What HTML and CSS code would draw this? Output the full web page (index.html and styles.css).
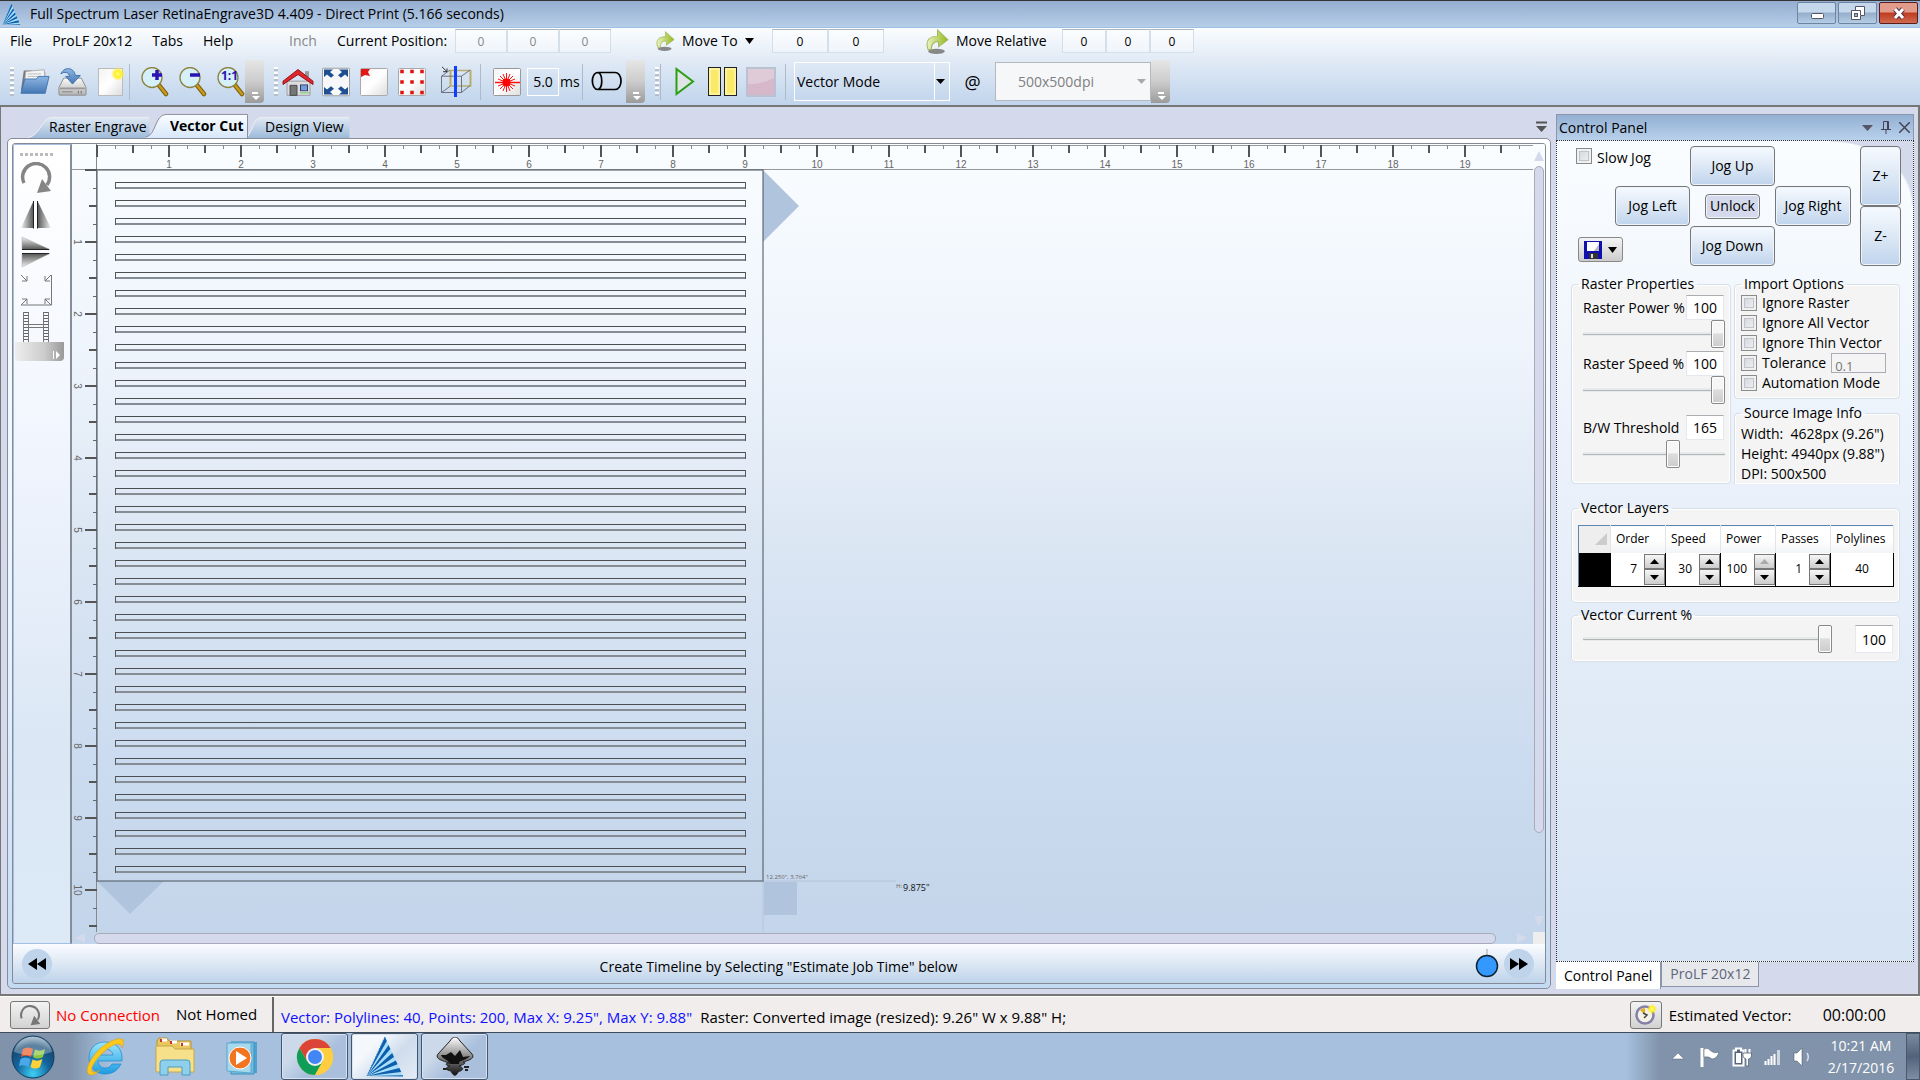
FILE: index.html
```html
<!DOCTYPE html>
<html lang="en">
<head>
<meta charset="utf-8">
<title>Full Spectrum Laser RetinaEngrave3D</title>
<link rel="stylesheet" href="styles.css">
</head>
<body>
<svg width="0" height="0" class="defs" aria-hidden="true">
  <defs>
    <linearGradient id="blueG" x1="0" y1="0" x2="0" y2="1"><stop offset="0" stop-color="#8fb6e2"/><stop offset="1" stop-color="#4478b4"/></linearGradient>
    <linearGradient id="greyG" x1="0" y1="0" x2="0" y2="1"><stop offset="0" stop-color="#fafafa"/><stop offset="1" stop-color="#b4b4b4"/></linearGradient>
    <linearGradient id="paperG" x1="0" y1="0" x2="1" y2="1"><stop offset="0" stop-color="#f4f4f4"/><stop offset=".5" stop-color="#fff"/><stop offset="1" stop-color="#dcdcdc"/></linearGradient>
    <linearGradient id="mirL" x1="0" x2="1"><stop offset="0" stop-color="#f2f2f2"/><stop offset="1" stop-color="#555"/></linearGradient>
    <linearGradient id="mirR" x1="0" x2="1"><stop offset="0" stop-color="#555"/><stop offset="1" stop-color="#f2f2f2"/></linearGradient>
    <linearGradient id="mirT" x1="0" y1="0" x2="0" y2="1"><stop offset="0" stop-color="#f2f2f2"/><stop offset="1" stop-color="#555"/></linearGradient>
    <linearGradient id="mirB" x1="0" y1="0" x2="0" y2="1"><stop offset="0" stop-color="#555"/><stop offset="1" stop-color="#f2f2f2"/></linearGradient>
    <linearGradient id="greenG" x1="0" x2="1"><stop offset="0" stop-color="#e9f2c0"/><stop offset="1" stop-color="#94b81c"/></linearGradient>
    <linearGradient id="tabG" x1="0" y1="0" x2="0" y2="1"><stop offset="0" stop-color="#dfe9f4"/><stop offset="1" stop-color="#9dbad9"/></linearGradient>
    <linearGradient id="tabA" x1="0" y1="0" x2="0" y2="1"><stop offset="0" stop-color="#fafdff"/><stop offset="1" stop-color="#d7e7fa"/></linearGradient>
    <radialGradient id="orbG" cx=".5" cy=".9" r=".9"><stop offset="0" stop-color="#3fd0f5"/><stop offset=".45" stop-color="#12659c"/><stop offset=".75" stop-color="#164a76"/><stop offset="1" stop-color="#9fb9cc"/></radialGradient>
    <linearGradient id="ieG" x1="0" y1="0" x2="0" y2="1"><stop offset="0" stop-color="#9be6fb"/><stop offset="1" stop-color="#1d9be2"/></linearGradient>
    <linearGradient id="inkG" x1="0" y1="0" x2="0" y2="1"><stop offset="0" stop-color="#fff"/><stop offset=".5" stop-color="#8a8a8a"/><stop offset="1" stop-color="#111"/></linearGradient>
    <radialGradient id="glow"><stop offset="0" stop-color="#ffff70"/><stop offset=".5" stop-color="#ffee30"/><stop offset="1" stop-color="#ffee30" stop-opacity="0"/></radialGradient>
    <g id="lens"><path d="M18 17L26 27" stroke="#7d6010" stroke-width="4.500" stroke-linecap="round"/><path d="M18 17L26 27" stroke="#c89a18" stroke-width="2.500" stroke-linecap="round"/><circle cx="12" cy="10.500" r="10" fill="#d6f0fa" stroke="#8d8440" stroke-width="1.300"/></g>
    <g id="fan"><path d="M20 0L38 39H2Z" fill="#a9def8"/><g fill="#0d5fae"><path d="M2 39L20 0 21.800 4ZM2 39L23.600 8 25.400 12ZM2 39L27.200 16 29 20ZM2 39L30.800 23.500 32.600 27.300ZM2 39L34.400 31 36.200 35ZM2 39L38 38.200V39.500Z"/></g><path d="M20 0L2 39" stroke="#2b76bd" stroke-dasharray="2 1"/></g>
    <g id="moveArrow"><ellipse cx="10" cy="25" rx="8" ry="3" fill="#888"/><path d="M2 23C-1 13 3 8 11 8V1L21 12 12 20V14C7 14 5 17 5 23Z" fill="url(#greenG)" stroke="#a5b860"/></g>
    <g id="overflow"><path d="M7 33H13" stroke="#fff" stroke-width="2"/><path d="M7 36H15L11 40Z" fill="#fff"/></g>
  </defs>
</svg>

<header class="titlebar">
  <svg width="19" height="21" viewBox="0 0 40 40" preserveAspectRatio="none"><use href="#fan"/></svg>
  <h1>Full Spectrum Laser RetinaEngrave3D 4.409 - Direct Print (5.166 seconds)</h1>
  <div class="winbtns">
    <button aria-label="Minimize"><svg width="38" height="20"><rect x="13.500" y="10.500" width="12" height="5" rx="1" fill="#fff" stroke="#556"/></svg></button>
    <button aria-label="Restore"><svg width="38" height="20"><path d="M16.500 3.500H25.500V12.500H21.500V16.500H12.500V7.500H16.500Z" fill="#fff" stroke="#556"/><rect x="15.500" y="10.500" width="3" height="3" fill="#9bb4d0" stroke="#556"/><path d="M16 7.500H21.500V12" fill="none" stroke="#556"/></svg></button>
    <button class="close" aria-label="Close"><svg width="38" height="20"><path d="M15 6L23 15M23 6L15 15" stroke="#534" stroke-width="5"/><path d="M15 6L23 15M23 6L15 15" stroke="#fff" stroke-width="3"/></svg></button>
  </div>
</header>

<div class="toolbars">
  <nav class="menurow">
    <div class="menus"><button>File</button><button>ProLF 20x12</button><button>Tabs</button><button>Help</button></div>
    <span class="unit">Inch</span>
    <span class="poslabel">Current Position:</span>
    <div class="fields pos"><input value="0" disabled aria-label="X position"><input value="0" disabled aria-label="Y position"><input value="0" disabled aria-label="Z position"></div>
    <button class="moveto"><svg width="19" height="20" viewBox="0 0 22 28" preserveAspectRatio="none"><use href="#moveArrow"/></svg>Move To <svg width="9" height="6"><path d="M0 0H9L4.500 6Z"/></svg></button>
    <div class="fields to"><input value="0" aria-label="Move to X"><input value="0" aria-label="Move to Y"></div>
    <button class="moverel"><svg width="23" height="25" viewBox="0 0 22 28" preserveAspectRatio="none"><use href="#moveArrow"/></svg>Move Relative</button>
    <div class="fields rel"><input value="0" aria-label="Relative X"><input value="0" aria-label="Relative Y"><input value="0" aria-label="Relative Z"></div>
  </nav>

  <div class="toolrow">
    <div class="group">
      <i class="grip"></i>
      <button aria-label="Open"><svg width="31" height="27" viewBox="0 0 32 32" preserveAspectRatio="none"><path d="M2 26L5 3H13L15 5H27V24Z" fill="#777"/><path d="M7 4L26 2L27 14H6Z" fill="#f4f4f4" stroke="#aaa"/><path d="M9 7H23M9 10H23" stroke="#bbb"/><path d="M6 13H18L20 10H31L27 30H2Z" fill="url(#blueG)" stroke="#3f74ae"/></svg></button>
      <button aria-label="Save"><svg width="31" height="29" viewBox="0 0 32 34" preserveAspectRatio="none"><path d="M7 13H25L30 24V32Q30 33 29 33H3Q2 33 2 32V24Z" fill="url(#greyG)" stroke="#888"/><path d="M3 25H29M5 29H16" stroke="#999" stroke-width="2"/><path d="M22 28V31M25 28V31" stroke="#666"/><path d="M4 8C7 0 17-1 19 10H24L16 20 9 11H13C12 6 8 5 4 8Z" fill="url(#blueG)" stroke="#3c6ea8"/></svg></button>
      <button aria-label="New"><svg width="31" height="29"><rect x="3.500" y="1.500" width="24" height="27" fill="url(#paperG)" stroke="#bbb"/><circle cx="23" cy="7" r="7" fill="url(#glow)"/></svg></button>
      <i class="sep"></i>
      <button aria-label="Zoom in"><svg width="29" height="30"><use href="#lens"/><path d="M17 3V13M12 8H22" stroke="#2b14b0" stroke-width="3.500"/></svg></button>
      <button aria-label="Zoom out"><svg width="29" height="30"><use href="#lens"/><path d="M12 8H22" stroke="#2b14b0" stroke-width="3.500"/></svg></button>
      <button aria-label="Actual size"><svg width="29" height="30"><use href="#lens"/><text x="5" y="13" class="one">1:1</text></svg></button>
      <button class="more" aria-label="More file tools"><svg width="19" height="43"><use href="#overflow"/></svg></button>
    </div>
    <div class="group">
      <i class="grip"></i>
      <button aria-label="Home"><svg width="32" height="30" viewBox="0 0 32 36" preserveAspectRatio="none"><path d="M5 17H28V34H5Z" fill="#ddd" stroke="#999"/><path d="M23 5H27V12H23Z" fill="#999"/><path d="M1 17L16 3 31 17V21L16 9 1 21Z" fill="#e2242c" stroke="#8a1015"/><path d="M8 22H15V34H8Z" fill="#777" stroke="#444"/><rect x="18.500" y="21.500" width="7" height="7" fill="#6f9fdc" stroke="#336"/><path d="M18 31H28" stroke="#6c6"/></svg></button>
      <button aria-label="Fit to window"><svg width="30" height="30" viewBox="0 0 30 36" preserveAspectRatio="none"><rect x="1.500" y="1.500" width="27" height="33" rx="1" fill="#f6f8fa" stroke="#999"/><path d="M3 3H12L9 6 13 10 10 13 6 9 3 12ZM27 3H18L21 6 17 10 20 13 24 9 27 12ZM3 33H12L9 30 13 26 10 23 6 27 3 24ZM27 33H18L21 30 17 26 20 23 24 27 27 24Z" fill="#1d4f91"/></svg></button>
      <button aria-label="Go to origin"><svg width="30" height="30"><rect x="1.500" y="1.500" width="27" height="27" rx="1" fill="url(#paperG)" stroke="#aaa"/><path d="M2 2H11L9 5 11 9 6 8 2 10Z" fill="#e01818"/></svg></button>
      <button aria-label="Job outline"><svg width="30" height="30"><rect x="1.500" y="1.500" width="27" height="27" rx="1" fill="url(#paperG)" stroke="#aaa"/><path d="M5 4.500h.01M15 4.500h.01M25 4.500h.01M5 15h.01M15 15h.01M25 15h.01M5 25.500h.01M15 25.500h.01M25 25.500h.01" stroke="#e01010" stroke-width="3.500" stroke-linecap="square"/></svg></button>
      <button class="wide" aria-label="Focus"><svg width="34" height="31" viewBox="0 0 34 38" preserveAspectRatio="none"><path d="M11.500 5.500H31.500V24.500H11.500Z" fill="none" stroke="#b8ad70" stroke-width="2"/><path d="M2.500 12.500H22.500V32.500H2.500ZM2.500 12.500L11 5M22.500 12.500L31 5M22.500 32.500L31 24M2.500 32.500L11 25" fill="none" stroke="#667"/><path d="M3 1L8 7M8 3V7H4" stroke="#222" fill="none"/><path d="M16.500 0V38" stroke="#1040ff" stroke-width="3"/></svg></button>
      <i class="sep"></i>
      <button class="laser" aria-label="Pulse laser"><svg width="30" height="30"><rect x="1.500" y="1.500" width="27" height="27" rx="1" fill="url(#paperG)" stroke="#999"/><g stroke="#ff1010"><path d="M3 15.500H28" stroke-width="1.500"/><path d="M14.500 6V25M8 9L21 22M21 9L8 22M11 7L18 24M18 7L11 24M6 12L23 19M6 19L23 12"/></g><circle cx="14.500" cy="15.500" r="4" fill="#f00"/></svg></button>
      <input class="ms" id="ms" value="5.0"><label class="mslabel" for="ms">ms</label>
      <i class="sep"></i>
      <button aria-label="Rotary"><svg width="32" height="21"><path d="M7 1.500H24C32 1.500 32 18.500 24 18.500H7C-.5 18.500-.5 1.500 7 1.500C12 3 12 17 7 18.500" fill="none" stroke="#000" stroke-width="1.700"/></svg></button>
      <button class="more" aria-label="More machine tools"><svg width="19" height="43"><use href="#overflow"/></svg></button>
    </div>
    <div class="group">
      <i class="grip"></i>
      <i class="sep"></i>
      <button aria-label="Run job"><svg width="22" height="31"><path d="M2.500 3L19 15.500 2.500 28Z" fill="#e0e4e6" stroke="#2aa010" stroke-width="2"/></svg></button>
      <button aria-label="Pause"><svg width="32" height="30"><g fill="#fbe96a" stroke="#222"><rect x="1.500" y=".5" width="12" height="28"/><rect x="17.500" y=".5" width="12" height="28"/></g><g fill="none" stroke="#fffbd0"><rect x="3" y="2" width="9" height="25"/><rect x="19" y="2" width="9" height="25"/></g></svg></button>
      <button aria-label="Stop" disabled><svg width="30" height="30"><rect x="1" y="1" width="28" height="28" fill="#dfcad8" stroke="#bac1d0" stroke-width="2"/><path d="M2 17Q14 18 28 11V28H2Z" fill="#d6b8ca"/></svg></button>
      <i class="sep mid"></i>
      <div class="combo"><select aria-label="Mode"><option>Vector Mode</option></select><svg width="9" height="5"><path d="M0 0H9L4.500 5Z"/></svg></div>
      <span class="at">@</span>
      <div class="combo off"><select aria-label="Resolution" disabled><option>500x500dpi</option></select><svg width="9" height="5"><path d="M0 0H9L4.500 5Z" fill="#aaa"/></svg></div>
      <button class="more" aria-label="More job tools"><svg width="19" height="43"><use href="#overflow"/></svg></button>
    </div>
  </div>
</div>

<main class="workspace">
  <section class="docs">
    <div class="tabs">
      <button class="tab t1"><svg viewBox="0 0 122 24" preserveAspectRatio="none"><path d="M0 23.500C12 22 14 1.500 24 1.500H121.500V24H0Z" fill="url(#tabG)"/><path d="M0 23.500C12 22 14 1.500 24 1.500H121.500" fill="none" stroke="#eee"/></svg><span>Raster Engrave</span></button>
      <button class="tab t2"><svg viewBox="0 0 102 26" preserveAspectRatio="none"><path d="M0 25C10 23 9 1.500 20 1.500H101.500V26H0Z" fill="url(#tabA)"/><path d="M0 25C10 23 9 1.500 20 1.500H101.500V26" fill="none" stroke="#8a8d9a"/></svg><span>Vector Cut</span></button>
      <button class="tab t3"><svg viewBox="0 0 102 24" preserveAspectRatio="none"><path d="M0 22C6 12 6 1.500 14 1.500H101.500V24H0Z" fill="url(#tabG)"/><path d="M0 22C6 12 6 1.500 14 1.500H101.500" fill="none" stroke="#eee"/></svg><span>Design View</span></button>
      <button class="doclist" aria-label="Document list"><svg width="11" height="11"><path d="M0 1.500H11" stroke="#555" stroke-width="2"/><path d="M0 5H11L5.500 11Z" fill="#555"/></svg></button>
    </div>
    <div class="frame"><div class="inner">
      <div class="board">
        <div class="toolbox">
          <i class="dots"></i>
          <button aria-label="Rotate"><svg width="32" height="32"><path d="M4 21A13.500 13.500 0 1 1 27 23" fill="none" stroke="#858585" stroke-width="3.500"/><path d="M22 17L31 29 17 31Z" fill="#858585"/></svg></button>
          <button aria-label="Mirror horizontally"><svg width="32" height="30"><path d="M13.500 1V28H1Z" fill="url(#mirL)"/><path d="M17.500 1V28H31Z" fill="url(#mirR)"/><path d="M13.500 1V28.500M17.500 1V28.500" stroke="#222"/></svg></button>
          <button aria-label="Mirror vertically"><svg width="32" height="32"><path d="M2 1V13.500H30Z" fill="url(#mirT)" stroke="#aaa" stroke-width=".5"/><path d="M2 31V17.500H30Z" fill="url(#mirB)" stroke="#aaa" stroke-width=".5"/><path d="M2 13.500H29M2 17.500H29" stroke="#222"/></svg></button>
          <button aria-label="Scale"><svg width="32" height="32"><g fill="none" stroke="#777"><path d="M1 31H31.500V1"/><path d="M1 1L7 7M7 2V7H2M31 1L25 7M25 2V7H30M1 31L7 25M2 25H7V30M31 31L25 25M30 25H25V30"/></g></svg></button>
          <button aria-label="Array"><svg width="26" height="30"><path d="M3 0V30M23 0V30" stroke="#666" stroke-width="4" stroke-dasharray="1 2"/><path d="M.5 0V30M5.500 0V30M20.500 0V30M25.500 0V30M5 12.500H21M5 15.500H21" stroke="#777" fill="none"/></svg></button>
          <button class="moreh" aria-label="More edit tools"><svg width="48" height="19"><path d="M38.500 9V17" stroke="#fff"/><path d="M41 9L45 13 41 17Z" fill="#fff"/></svg></button>
        </div>
        <div class="viewport">
          <svg class="canvas" id="canvas" role="img" aria-label="Job preview"></svg>
          <div class="vscroll"><svg width="10" height="10"><path d="M5 0L10 10H0Z" fill="#d4d9ec"/></svg><i class="thumb"></i><svg width="10" height="10"><path d="M0 0H10L5 10Z" fill="#d4d9ec"/></svg></div>
          <div class="hscroll"><svg width="10" height="10"><path d="M10 0V10L0 5Z" fill="#d4d9ec"/></svg><i class="thumb"></i><svg width="10" height="10"><path d="M0 0L10 5 0 10Z" fill="#d4d9ec"/></svg></div>
          <i class="corner"></i>
        </div>
      </div>
      <div class="timeline">
        <button class="round" aria-label="Rewind"><svg width="18" height="12"><path d="M9 0V12L0 6ZM18 0V12L9 6Z"/></svg></button>
        <p>Create Timeline by Selecting "Estimate Job Time" below</p>
        <svg class="knob" width="24" height="30"><path d="M12 0V6" stroke="#ccc" stroke-width="2"/><circle cx="12" cy="17" r="10.500" fill="#3399ff" stroke="#123" stroke-width="1.500"/></svg>
        <button class="round" aria-label="Forward"><svg width="18" height="12"><path d="M0 0L9 6 0 12ZM9 0L18 6 9 12Z"/></svg></button>
      </div>
    </div></div>
  </section>

  <aside class="panel">
    <div class="panelhead"><h2>Control Panel</h2>
      <button aria-label="Panel menu"><svg width="11" height="6"><path d="M0 0H11L5.500 6Z" fill="#556"/></svg></button>
      <button aria-label="Pin panel"><svg width="10" height="13"><path d="M2.500 8V.5H7.500V8M0 8.500H10M5 9V13M6.500 1V8" fill="none" stroke="#445"/></svg></button>
      <button aria-label="Close panel"><svg width="11" height="11"><path d="M0 0L11 11M11 0L0 11" stroke="#445" stroke-width="1.500"/></svg></button>
    </div>
    <div class="panelbody">
      <div class="jog">
        <label class="slow"><input type="checkbox">Slow Jog</label>
        <button class="btn up">Jog Up</button>
        <button class="btn left">Jog Left</button>
        <button class="btn unlock">Unlock</button>
        <button class="btn right">Jog Right</button>
        <button class="savebtn" aria-label="Save settings"><svg width="18" height="18"><rect width="18" height="18" fill="#1010b0"/><path d="M3 1H15V10H3Z" fill="#fff"/><path d="M10 10L15 3V10Z" fill="#bbb"/><path d="M5 12H14V18H5Z" fill="#333"/><path d="M7 13H9V17H7Z" fill="#ddd"/></svg><svg width="9" height="6"><path d="M0 0H9L4.500 6Z"/></svg></button>
        <button class="btn down">Jog Down</button>
        <div class="zcol"><button class="btn">Z+</button><button class="btn">Z-</button></div>
      </div>
      <div class="props">
        <fieldset class="raster"><legend>Raster Properties</legend>
          <div class="prop"><label for="rp">Raster Power %</label><input class="num" value="100" aria-label="Raster power value"><input id="rp" type="range" min="0" max="100" value="100"></div>
          <div class="prop"><label for="rs">Raster Speed %</label><input class="num" value="100" aria-label="Raster speed value"><input id="rs" type="range" min="0" max="100" value="100"></div>
          <div class="prop last"><label for="bw">B/W Threshold</label><input class="num" value="165" aria-label="Threshold value"><input id="bw" type="range" min="0" max="255" value="165"></div>
        </fieldset>
        <div class="side">
          <fieldset class="import"><legend>Import Options</legend>
            <label><input type="checkbox">Ignore Raster</label>
            <label><input type="checkbox">Ignore All Vector</label>
            <label><input type="checkbox">Ignore Thin Vector</label>
            <div class="tol"><label><input type="checkbox">Tolerance</label><input class="tolval" value="0.1" disabled aria-label="Tolerance value"></div>
            <label><input type="checkbox">Automation Mode</label>
          </fieldset>
          <fieldset class="source"><legend>Source Image Info</legend>
            <p>Width:&nbsp; 4628px (9.26")</p><p>Height: 4940px (9.88")</p><p>DPI: 500x500</p>
          </fieldset>
        </div>
      </div>
      <fieldset class="layers"><legend>Vector Layers</legend>
        <table>
          <thead><tr><th class="sel"><svg width="12" height="12"><path d="M12 0V12H0Z" fill="#ccc"/></svg></th><th>Order</th><th>Speed</th><th>Power</th><th>Passes</th><th class="poly">Polylines</th></tr></thead>
          <tbody><tr><td class="sel swatch"></td>
            <td><div class="spin"><input value="7" aria-label="Order"><div><button aria-label="Order up"><svg width="9" height="5"><path d="M0 5H9L4.500 0Z"/></svg></button><button aria-label="Order down"><svg width="9" height="5"><path d="M0 0H9L4.500 5Z"/></svg></button></div></div></td>
            <td><div class="spin"><input value="30" aria-label="Speed"><div><button aria-label="Speed up"><svg width="9" height="5"><path d="M0 5H9L4.500 0Z"/></svg></button><button aria-label="Speed down"><svg width="9" height="5"><path d="M0 0H9L4.500 5Z"/></svg></button></div></div></td>
            <td><div class="spin"><input value="100" aria-label="Power"><div><button aria-label="Power up" disabled><svg width="9" height="5"><path d="M0 5H9L4.500 0Z" fill="#aaa"/></svg></button><button aria-label="Power down"><svg width="9" height="5"><path d="M0 0H9L4.500 5Z"/></svg></button></div></div></td>
            <td><div class="spin"><input value="1" aria-label="Passes"><div><button aria-label="Passes up"><svg width="9" height="5"><path d="M0 5H9L4.500 0Z"/></svg></button><button aria-label="Passes down"><svg width="9" height="5"><path d="M0 0H9L4.500 5Z"/></svg></button></div></div></td>
            <td class="poly">40</td></tr></tbody>
        </table>
      </fieldset>
      <fieldset class="current"><legend>Vector Current %</legend>
        <div class="currow"><input type="range" min="0" max="100" value="100" aria-label="Vector current"><input class="num" value="100" aria-label="Vector current value"></div>
      </fieldset>
    </div>
    <div class="paneltabs"><button class="on">Control Panel</button><button>ProLF 20x12</button></div>
  </aside>
</main>

<footer class="status">
  <button class="sbtn" aria-label="Reconnect"><svg width="22" height="22" viewBox="0 0 32 32"><path d="M4 21A13 13 0 1 1 27 23" fill="none" stroke="#777" stroke-width="3"/><path d="M22 17L31 29 17 31Z" fill="#777"/></svg></button>
  <span class="red">No Connection</span><span class="homed">Not Homed</span>
  <span class="info"><b>Vector: Polylines: 40, Points: 200, Max X: 9.25", Max Y: 9.88"</b>Raster: Converted image (resized): 9.26" W x 9.88" H;</span>
  <button class="sbtn est" aria-label="Estimate job time"><svg width="22" height="22"><circle cx="10" cy="11" r="8.500" fill="#f4f2e4" stroke="#8580a8" stroke-width="2.500"/><path d="M10 11V4A7 7 0 0 0 5 6Z" fill="#e0b030"/><path d="M8 9L12 11 9 14" stroke="#444" fill="none" stroke-width="1.500"/><circle cx="17" cy="5" r="5" fill="url(#glow)"/></svg></button>
  <span class="estlabel">Estimated Vector:</span><span class="time">00:00:00</span>
</footer>

<footer class="taskbar">
  <button class="start" aria-label="Start"><svg width="44" height="44"><circle cx="22" cy="22" r="21" fill="url(#orbG)" stroke="#123a5c"/><path d="M12 14Q17 11 22 14L20 22Q15 19 10 22Z" fill="#ee5a24"/><path d="M24 14.500Q29 17 34 14L32 22Q27 25 22 22Z" fill="#8cc63f"/><path d="M9.500 24Q14 21 19.500 24L17.500 32Q13 29 8 31Z" fill="#4aa8e8"/><path d="M21.500 24.500Q26 27 31.500 24L29 32Q24 35 19.500 32Z" fill="#ffd23a"/><path d="M3 17A19.500 19.500 0 0 1 41 17Q22 24 3 17Z" fill="#fff" opacity=".3"/></svg></button>
  <button class="pin" aria-label="Internet Explorer"><svg width="40" height="40"><path d="M20 5C10 5 4 12 4 21S11 37 20 37C28 37 33 33 36 27H27C25 30 23 31 20 31C16 31 13 28 13 24H37C38 12 31 5 20 5ZM13 18C14 14 16 12 20 12S27 14 28 18Z" fill="url(#ieG)" stroke="#1c86cc" stroke-width=".7"/><path d="M6 38C-3 37 5 20 17 10C27 2 36 0 38 3C39 5 38 8 37 11C37 6 31 5 21 13C10 22 4 33 8 35Q11 36 15 33Q10 38 6 38Z" fill="#fbc81c" stroke="#d99a08" stroke-width=".5"/></svg></button>
  <button class="pin" aria-label="Explorer"><svg width="40" height="40"><path d="M2 4L4 1H12L14 4H36V14H2Z" fill="#e8c75c" stroke="#b99436"/><path d="M6 3H12M15 5H22M25 7H34" stroke="#fff" stroke-width="3"/><path d="M6 2V5M16 4V7M27 6V9" stroke="#c33" stroke-width="2"/><path d="M1 9H17L20 12H39V35H1Z" fill="#f6e08a" stroke="#c9a646"/><path d="M5 38V26Q5 23 8 23H32Q35 23 35 26V38H27V30H13V38Z" fill="#8ed0ec" stroke="#4c9cc4"/></svg></button>
  <button class="pin" aria-label="Media Player"><svg width="38" height="38"><path d="M10 4H32V35H10Z" fill="#4da3cf"/><path d="M6 4H29V36H6Z" fill="#74bde0" stroke="#3c8fbd"/><path d="M2 5H26V35L2 33Z" fill="#a6d9ee" stroke="#5aa6cc"/><circle cx="15" cy="20" r="11" fill="#f27420" stroke="#fff"/><path d="M11 13L22 20 11 27Z" fill="#fff"/></svg></button>
  <div class="running">
    <button class="run" aria-label="Chrome"><svg width="38" height="38"><circle cx="19" cy="19" r="18" fill="#ffcd40"/><path d="M19 10H34.600A18 18 0 0 0 3.400 10L11 23Z" fill="#db4437"/><path d="M3.400 10A18 18 0 0 0 19 37L27 23H11Z" fill="#0f9d58"/><path d="M19 37L27 23A9 9 0 0 0 27 15L19 10H34.600A18 18 0 0 1 19 37Z" fill="#ffcd40"/><circle cx="19" cy="19" r="9" fill="#f1f1f1"/><circle cx="19" cy="19" r="7" fill="#4285f4"/></svg></button>
    <button class="run active" aria-label="RetinaEngrave"><svg width="40" height="40"><use href="#fan"/></svg></button>
    <button class="run" aria-label="Inkscape"><svg width="38" height="40"><path d="M19 0C21 0 22 1 24 4L36 17C40 22 30 24 27 25C32 26 26 28 23 29C31 32 24 34 22 35C20 40 17 39 15 34C10 33 8 31 14 29C8 28 10 26 13 26C8 24-2 22 2 17L14 4C16 1 17 0 19 0Z" fill="url(#inkG)" stroke="#222"/><path d="M10 18L15 15 19 19 24 13 27 20 34 19C30 24 22 23 23 27H14C12 22 6 22 5 18Z" fill="#111"/><path d="M7 32h4M28 30h5M29 33h3" stroke="#222" stroke-width="2"/></svg></button>
  </div>
  <div class="tray">
    <svg width="12" height="7"><path d="M6 0L12 6H0Z" fill="#fff" stroke="#567" stroke-width=".5"/></svg>
    <svg width="20" height="20"><path d="M2 1V20" stroke="#fff" stroke-width="3"/><path d="M4 2Q8 0 11 4Q14 7 19 5Q17 12 12 12Q9 9 4 10Z" fill="#fff" stroke="#456" stroke-width=".5"/></svg>
    <svg width="20" height="20"><path d="M1.500 3.500H4V1.500H9V3.500H11.500V18.500H1.500Z" fill="#56667c" stroke="#fff" stroke-width="2"/><rect x="4" y="6" width="5" height="10" fill="#fff"/><path d="M13.500 2V6M17.500 2V6" stroke="#fff" stroke-width="2"/><path d="M11 6H19.500V9Q19 12 16.500 12V19H14V12Q11 11 11 9Z" fill="#fff" stroke="#456" stroke-width=".7"/></svg>
    <svg width="17" height="16"><path d="M1.500 12V16M4.500 10V16M7.500 7V16M10.500 5V16" stroke="#fff" stroke-width="2"/><path d="M14.500 1V16" stroke="#cdd5de" stroke-width="3"/></svg>
    <svg width="18" height="20"><path d="M1 6H4L9 1V19L4 14H1Z" fill="#fff" stroke="#456" stroke-width=".5"/><path d="M14 6Q16.500 10 14 14" fill="none" stroke="#dde" stroke-width="1.500"/></svg>
    <div class="clock">10:21 AM<br>2/17/2016</div>
  </div>
  <button class="desk" aria-label="Show desktop"></button>
</footer>
<script src="canvas.js"></script>
</body>
</html>
```
FILE: styles.css
```css
* { box-sizing: border-box; }
body { margin: 0; min-height: 100vh; display: flex; flex-direction: column; font: 15px/20px "Open Sans", "Noto Sans", sans-serif; color: #000; background: #d4d9ec; overflow: hidden; }
button, input, select { font: inherit; color: inherit; margin: 0; padding: 0; border: 0; background: none; border-radius: 0; }
h1, h2, p { margin: 0; font-size: 14px; font-weight: 400; }
svg { display: block; flex: none; }
.defs { position: absolute; }

/* Title bar */
.titlebar { height: 28px; display: flex; align-items: center; gap: 9px; padding: 0 2px; border-top: 1px solid #333; border-bottom: 1px solid #9fc0e2; background: linear-gradient(#95aed0, #b7cee8); }
.titlebar h1 { flex: 1; white-space: nowrap; }
.winbtns { display: flex; gap: 2px; align-self: flex-start; padding-top: 1px; }
.winbtns button { width: 39px; height: 22px; border: 1px solid #6d84a2; border-radius: 2px; background: linear-gradient(#c5d7ea 45%, #94aecb 50%, #b5cde5); }
.winbtns .close { border-color: #5b1c1c; background: linear-gradient(#e39c8c 45%, #bf3b20 50%, #cf6a50); }

/* Toolbars */
.toolbars { height: 79px; border-bottom: 2px solid #777; background: linear-gradient(#fbfdff, #dfe9f5 45%, #c0d4ec); }
.menurow { height: 26px; display: flex; align-items: center; white-space: nowrap; font-size: 14px; }
.menus { display: flex; gap: 20px; width: 279px; padding-left: 10px; }
.unit { width: 48px; padding-left: 10px; color: #888; }
.poslabel { width: 128px; padding-left: 10px; }
.fields { display: flex; }
.fields input { height: 24px; border: 1px solid #d5dfea; border-top-color: #abb5c0; text-align: center; font-size: 12px; background: rgba(255,255,255,.35); }
.pos { width: 201px; } .pos input { width: 52px; color: #888; }
.to { width: 154px; } .to input { width: 56px; }
.rel input { width: 44px; }
.moveto { display: flex; align-items: center; gap: 7px; width: 116px; }
.moverel { display: flex; align-items: center; gap: 7px; width: 136px; }
.toolrow { display: flex; gap: 10px; padding: 6px 0 0 10px; }
.group { display: flex; align-items: center; height: 43px; }
.group button { width: 38px; display: flex; justify-content: center; }
.group .wide { width: 49px; }
.group .laser { width: 41px; }
.grip { width: 4px; height: 30px; background: repeating-linear-gradient(#fff 0 2px, #b8bec8 2px 4px, transparent 4px 5px); margin-right: 1px; }
.sep { width: 1px; height: 36px; background: #aebacb; margin: 0 5px 0 0; }
.sep.mid { margin: 0 8px 0 5px; }
.group .more { width: 19px; height: 43px; border-radius: 0 0 4px; background: linear-gradient(#e6e6e6, #ccc 50%, #9b9b9b); }
.group:first-child .more { margin-left: -4px; }
.one { font: bold 12px "Open Sans", sans-serif; fill: #2b14b0; }
.ms { width: 32px; height: 28px; border: 1px solid #fff; text-align: center; margin-right: 1px; font-size: 14px; }
.mslabel { width: 22px; font-size: 14px; }
.combo { position: relative; width: 156px; height: 39px; border: 1px solid #fff; display: flex; }
.combo select { appearance: none; width: 100%; padding-left: 2px; font-size: 14px; opacity: 1; }
.combo svg { position: absolute; right: 4px; top: 16px; }
.combo::after { content: ""; position: absolute; right: 14px; top: 0; bottom: 0; width: 1px; background: #fff; }
.combo.off { border-color: #b4b9c0; background: #f6f7f9; }
.combo.off select { padding-left: 22px; color: #808080; }
.combo.off::after { display: none; }
.at { width: 45px; text-align: center; font-size: 18px; }

/* Workspace */
.workspace { flex: 1; display: flex; gap: 5px; padding: 7px 4px 5px 6px; border: solid #777; border-width: 0 2px 2px 1px; min-height: 0; }
.docs { flex: 1; min-width: 0; display: flex; flex-direction: column; }
.tabs { height: 24px; display: flex; align-items: flex-end; padding-left: 21px; }
.tab { position: relative; height: 22px; text-align: left; white-space: nowrap; font-size: 14px; }
.tab svg { position: absolute; inset: 0; width: 100%; height: 100%; }
.tab span { position: relative; }
.t1 { width: 122px; padding-left: 21px; }
.t2 { width: 102px; height: 25px; padding-left: 24px; margin-left: -4px; font-weight: 700; z-index: 1; }
.t3 { width: 102px; padding-left: 17px; }
.doclist { margin-left: auto; align-self: center; padding-right: 4px; }
.frame { flex: 1; display: flex; padding: 4px; border: 1px solid #888d9a; border-radius: 5px; background: linear-gradient(#fff, #e8f2fd 60%, #c4daf2); min-height: 0; }
.inner { flex: 1; display: flex; flex-direction: column; border: 1px solid #858a96; border-radius: 3px; min-width: 0; overflow: hidden; }
.board { flex: 1; display: flex; min-height: 0; }
.toolbox { width: 59px; display: flex; flex-direction: column; align-items: flex-start; gap: 6px; padding: 8px 0 0 6px; border: 1px solid #a3c0e2; border-right: 2px solid #858d98; background: linear-gradient(#fff, #f2f6fe 35%, #dbe7f5 75%, #dce9f6); }
.toolbox button { flex: none; }
.toolbox button:nth-of-type(5) { padding-left: 3px; }
.dots { width: 34px; height: 3px; background: repeating-linear-gradient(90deg, #bbb 0 3px, transparent 3px 5px); }
.toolbox .moreh { align-self: stretch; margin: -6px 6px 0 -5px; border-radius: 0 0 4px 4px; background: linear-gradient(90deg, #eee, #ccc 60%, #999); }
.viewport { flex: 1; min-width: 0; display: grid; grid-template: 1fr 12px / 1fr 12px; background: linear-gradient(#fafdff, #eef4fc 26%, #dbe6f3 50%, #cadaef 80%, #c3d5ea); }
.canvas { width: 100%; height: 100%; min-height: 0; }
.canvas text { font-family: "Liberation Sans", sans-serif; font-size: 10px; fill: #666; }
.canvas .cursor { font-size: 6px; font-family: "Open Sans", sans-serif; }
.canvas .dim { font-size: 9px; font-family: "Open Sans", sans-serif; fill: #111; }
.vscroll { display: flex; flex-direction: column; align-items: center; gap: 5px; padding: 7px 0 6px; }
.hscroll { display: flex; align-items: center; gap: 9px; padding: 0 6px 0 3px; }
.thumb { border: 1px solid #aab; border-radius: 5px; background: #d4d9ec; }
.vscroll .thumb { width: 10px; height: 667px; margin-bottom: auto; }
.hscroll .thumb { flex: 1; height: 11px; margin-right: 12px; }
.corner { background: #eee; }
.timeline { height: 39px; display: flex; align-items: center; gap: 5px; padding: 0 11px 0 9px; background: linear-gradient(#fafcff, #dde8f4 50%, #bed3ea); }
.timeline p { flex: 1; text-align: center; padding: 6px 0 0 30px; }
.round { width: 30px; height: 30px; border-radius: 50%; background: #bfd3ea; display: grid; place-items: center; }

/* Control panel */
.panel { width: 358px; display: flex; flex-direction: column; font-size: 14px; }
.panelhead { height: 26px; display: flex; align-items: center; gap: 8px; padding: 0 3px 0 2px; border: 1px solid #8c95aa; border-bottom: 0; background: linear-gradient(#93b0d3, #b8d0eb); }
.panelhead h2 { flex: 1; }
.panelbody { flex: 1; display: flex; flex-direction: column; padding: 5px 13px 0 14px; border: 1px dotted #333; background: radial-gradient(ellipse at 0 100%, transparent 69%, #d4d9ec 71%) right top / 82px 64px no-repeat, linear-gradient(#fafdff, #eaf1fb 40%, #dce8f5 80%, #d6e3f3); }
.jog { display: grid; grid-template: repeat(3, 40px) / 119px 85px 76px 1fr; }
.btn { border: 1px solid #777; border-radius: 4px; background: linear-gradient(#f6faff, #dde8f5 50%, #bfd4ed); box-shadow: inset 0 0 0 1px #eef4fb; }
.slow { display: flex; gap: 5px; padding: 2px 0 0 5px; align-items: flex-start; }
.up, .down { grid-column: 2; }
.left { grid-area: 2 / 1; width: 75px; justify-self: end; }
.unlock { grid-area: 2 / 2; place-self: center; width: 55px; height: 25px; background: #d4d9ec; }
.right { grid-area: 2 / 3; }
.down { grid-row: 3; }
.savebtn { grid-area: 3 / 1; width: 45px; height: 25px; margin: 11px 0 0 7px; display: flex; align-items: center; justify-content: space-evenly; border: 1px solid #888; border-radius: 3px; background: linear-gradient(#f4f4f4, #ccc); }
.zcol { grid-area: 1 / 4 / 4 / 5; display: flex; flex-direction: column; padding-left: 9px; width: 50px; }
.zcol .btn { flex: 1; }
input[type=checkbox] { appearance: none; flex: none; width: 16px; height: 16px; border: 1px solid #8b8b8b; background: linear-gradient(135deg, #cfd3da, #f4f4f6); box-shadow: inset 0 0 0 2px #f0f0f0, inset 0 0 0 3px #c0c4ca; }
fieldset { margin: 0; min-width: 0; border: 1px solid #d5dfe5; border-radius: 4px; background: #f4f4f4; padding: 0 0 0 6px; box-shadow: inset 0 0 0 1px #fff; }
legend { padding: 0 3px; line-height: 22px; height: 22px; }
.props { display: grid; grid-template-columns: 160px 1fr; gap: 3px; margin-top: 7px; height: 211px; }
.prop { display: grid; grid-template: 25px 28px / 1fr 39px; align-items: center; height: 56px; padding: 0 5px; white-space: nowrap; }
.prop.last { margin-top: 8px; }
.num { width: 38px; height: 25px; border: 1px solid #e3e9ef; border-top-color: #abadb3; background: #fff; text-align: center; }
.prop [type=range] { grid-column: 1 / 3; width: 142px; }
input[type=range] { appearance: none; height: 28px; background: linear-gradient(#b0b6b6, #b0b6b6) center / 100% 1px no-repeat, linear-gradient(#e7eaea, #e7eaea) center / 100% 4px no-repeat; }
input[type=range]::-webkit-slider-thumb { appearance: none; width: 14px; height: 28px; border: 1px solid #888; border-radius: 2px; background: linear-gradient(#f6f6f6 45%, #ddd 50%, #ccc); box-shadow: inset 0 0 0 1px #fff; }
.side { display: flex; flex-direction: column; gap: 3px; }
.import { height: 126px; }
.import label, .tol { display: flex; align-items: center; gap: 5px; height: 20px; white-space: nowrap; }
.import > label:first-of-type { margin-top: -2px; }
.tolval { width: 55px; height: 20px; border: 1px solid #aaadb3; color: #777; padding: 6px 0 0 3px; font-size: 13px; }
.source { flex: 1; border-bottom: 0; border-radius: 4px 4px 0 0; white-space: nowrap; }
.layers { height: 106px; margin-top: 13px; padding-top: 6px; }
table { border-collapse: collapse; width: 316px; table-layout: fixed; font-size: 12px; line-height: 16px; border: 1px solid #5d86b0; border-right: 0; background: #fff; }
th { height: 27px; padding: 0 0 0 5px; text-align: left; font-weight: 400; background: linear-gradient(#fff 50%, #f2f3f5); border-right: 1px solid #e2e4e6; font-size: 12px; white-space: nowrap; width: 55px; }
th.sel { width: 32px; background: #eee; padding-left: 16px; }
th.poly { width: 63px; }
td { height: 34px; padding: 0; border-right: 1px solid #000; border-bottom: 1px solid #000; }
td.poly { text-align: center; }
.swatch { background: #000; }
.spin { display: flex; height: 31px; }
.spin input { flex: 1; min-width: 0; text-align: right; padding-right: 7px; }
.spin > div { display: flex; flex-direction: column; width: 21px; }
.spin button { flex: 1; display: grid; place-items: center; border: 1px solid #777; background: linear-gradient(#f6f6f6, #ccc); }
.current { height: 58px; margin-top: 1px; }
.currow { display: flex; align-items: center; justify-content: space-between; height: 26px; padding: 0 6px 0 5px; }
.currow [type=range] { width: 249px; }
.currow .num { height: 28px; }
.paneltabs { display: flex; align-items: flex-start; height: 27px; }
.paneltabs button { height: 25px; padding: 0 8px; border: 1px solid #8c95aa; border-top: 0; background: #e6e8ec; color: #5f6578; white-space: nowrap; }
.paneltabs .on { height: 27px; background: #fff; color: #000; border: 0; border-right: 1px solid #8c95aa; }

/* Status bar */
.status { height: 36px; display: flex; align-items: center; padding: 0 34px 0 10px; background: #f0edec; border-top: 1px solid #fff; white-space: nowrap; }
.sbtn { width: 40px; height: 28px; display: grid; place-items: center; border: 1px solid #777; border-radius: 3px; background: linear-gradient(#f3f3f3, #d2d2d2); }
.red { color: #f00; width: 126px; padding-left: 6px; }
.homed { width: 98px; align-self: stretch; border-right: 2px solid #666; padding-top: 7px; }
.info { flex: 1; padding: 4px 0 0 7px; }
.info b { color: #1010ff; font-weight: 400; margin-right: 8px; }
.est { width: 32px; }
.estlabel { width: 161px; padding-left: 7px; }
.time { font-size: 16px; }

/* Taskbar */
.taskbar { height: 48px; display: flex; align-items: center; border-top: 1px solid #3d4b5c; background: linear-gradient(90deg, #8093ab 0 70px, #a6c0de 110px); }
.start { padding: 0 17px 0 11px; }
.pin { width: 70px; padding-left: 13px; }
.running { display: flex; gap: 3px; align-self: stretch; }
.pin + .running { margin-left: -1px; }
.run { width: 67px; display: grid; place-items: center; border: 1px solid #45566c; border-radius: 3px; background: linear-gradient(135deg, #cbd9ea 30%, #a9bfdc 60%); box-shadow: inset 0 0 0 1px #d7e3f0; }
.run.active { background: linear-gradient(135deg, #f4f8fc 30%, #cfdcec 60%, #e3ecf6); }
.tray { margin-left: auto; align-self: stretch; display: flex; align-items: center; gap: 12px; padding: 0 7px 0 46px; color: #fff; background: linear-gradient(90deg, transparent, #8193aa 34px); }
.tray svg:first-child { margin-right: 4px; }
.clock { width: 76px; font-size: 14px; line-height: 22px; text-align: center; white-space: nowrap; }
.desk { width: 14px; align-self: stretch; border: 1px solid #4a586b; background: linear-gradient(#7a8ba0, #53627a 50%, #7d8ea5); }
```
FILE: canvas.js
```js
// Draws the rulers and the job preview at 72 px per inch.
const svg = document.getElementById('canvas');
const PPI = 72, OX = 25, OY = 26;

function add(tag, attrs, text) {
  const el = document.createElementNS('http://www.w3.org/2000/svg', tag);
  for (const k in attrs) el.setAttribute(k, attrs[k]);
  if (text) el.textContent = text;
  svg.appendChild(el);
}
function rect(x, y, width, height, fill) { add('rect', { x, y, width, height, fill }); }

function draw() {
  svg.replaceChildren();
  const w = svg.clientWidth, h = svg.clientHeight;
  const step = PPI / 4;
  rect(OX, 1, w, 1, '#999');
  rect(OX, OY - 1, w, 1, '#999');
  rect(0, OY - 1, OX, 1, '#999');
  rect(OX - 1, 0, 1, h, '#888');
  for (let q = 0; OX + q * step < w - 4; q++) {
    const x = OX + q * step;
    if (q % 4 === 0) {
      rect(x - 1, 1, 2, 12, '#555');
      if (q) add('text', { x, y: 24, 'text-anchor': 'middle' }, String(q / 4));
    } else if (q % 2 === 0) rect(x - 1, 1, 2, 8, '#555');
    else rect(x, 1, 1, 4, '#888');
  }
  for (let q = 0; OY + q * step < h; q++) {
    const y = OY + q * step;
    if (q % 4 === 0) {
      rect(13, y - 1, 12, 2, '#555');
      if (q) add('text', { 'text-anchor': 'middle', transform: `translate(2 ${y}) rotate(90)` }, String(q / 4));
    } else if (q % 2 === 0) rect(17, y - 1, 8, 2, '#555');
    else rect(21, y, 4, 1, '#666');
  }
  add('path', { d: 'M691 26L727 62 691 98ZM25 737H92L58 770ZM691 737H725V771H691Z', fill: '#b0c4de' });
  rect(691, 736, 133, 2, '#bccde4');
  rect(690, 737, 2, 53, '#bccde4');
  add('rect', { x: 25, y: 26, width: 666, height: 711, fill: 'none', stroke: '#55606a', 'stroke-opacity': .75, 'stroke-width': 1.5 });
  for (let i = 0; i < 39; i++) {
    const y = 38 + i * 18;
    rect(43, y, 631, 1, '#4c4f52');
    rect(43, y + 5, 631, 2, '#868c93');
    rect(43, y, 1, 7, '#55585c');
    rect(673, y, 1, 7, '#55585c');
  }
  add('text', { x: 694, y: 735, class: 'cursor' }, '12.250", 3.764"');
  add('text', { x: 824, y: 744, class: 'cursor' }, 'H:');
  add('text', { x: 831, y: 747, class: 'dim' }, '9.875"');
}
draw();
window.addEventListener('resize', draw);
```
